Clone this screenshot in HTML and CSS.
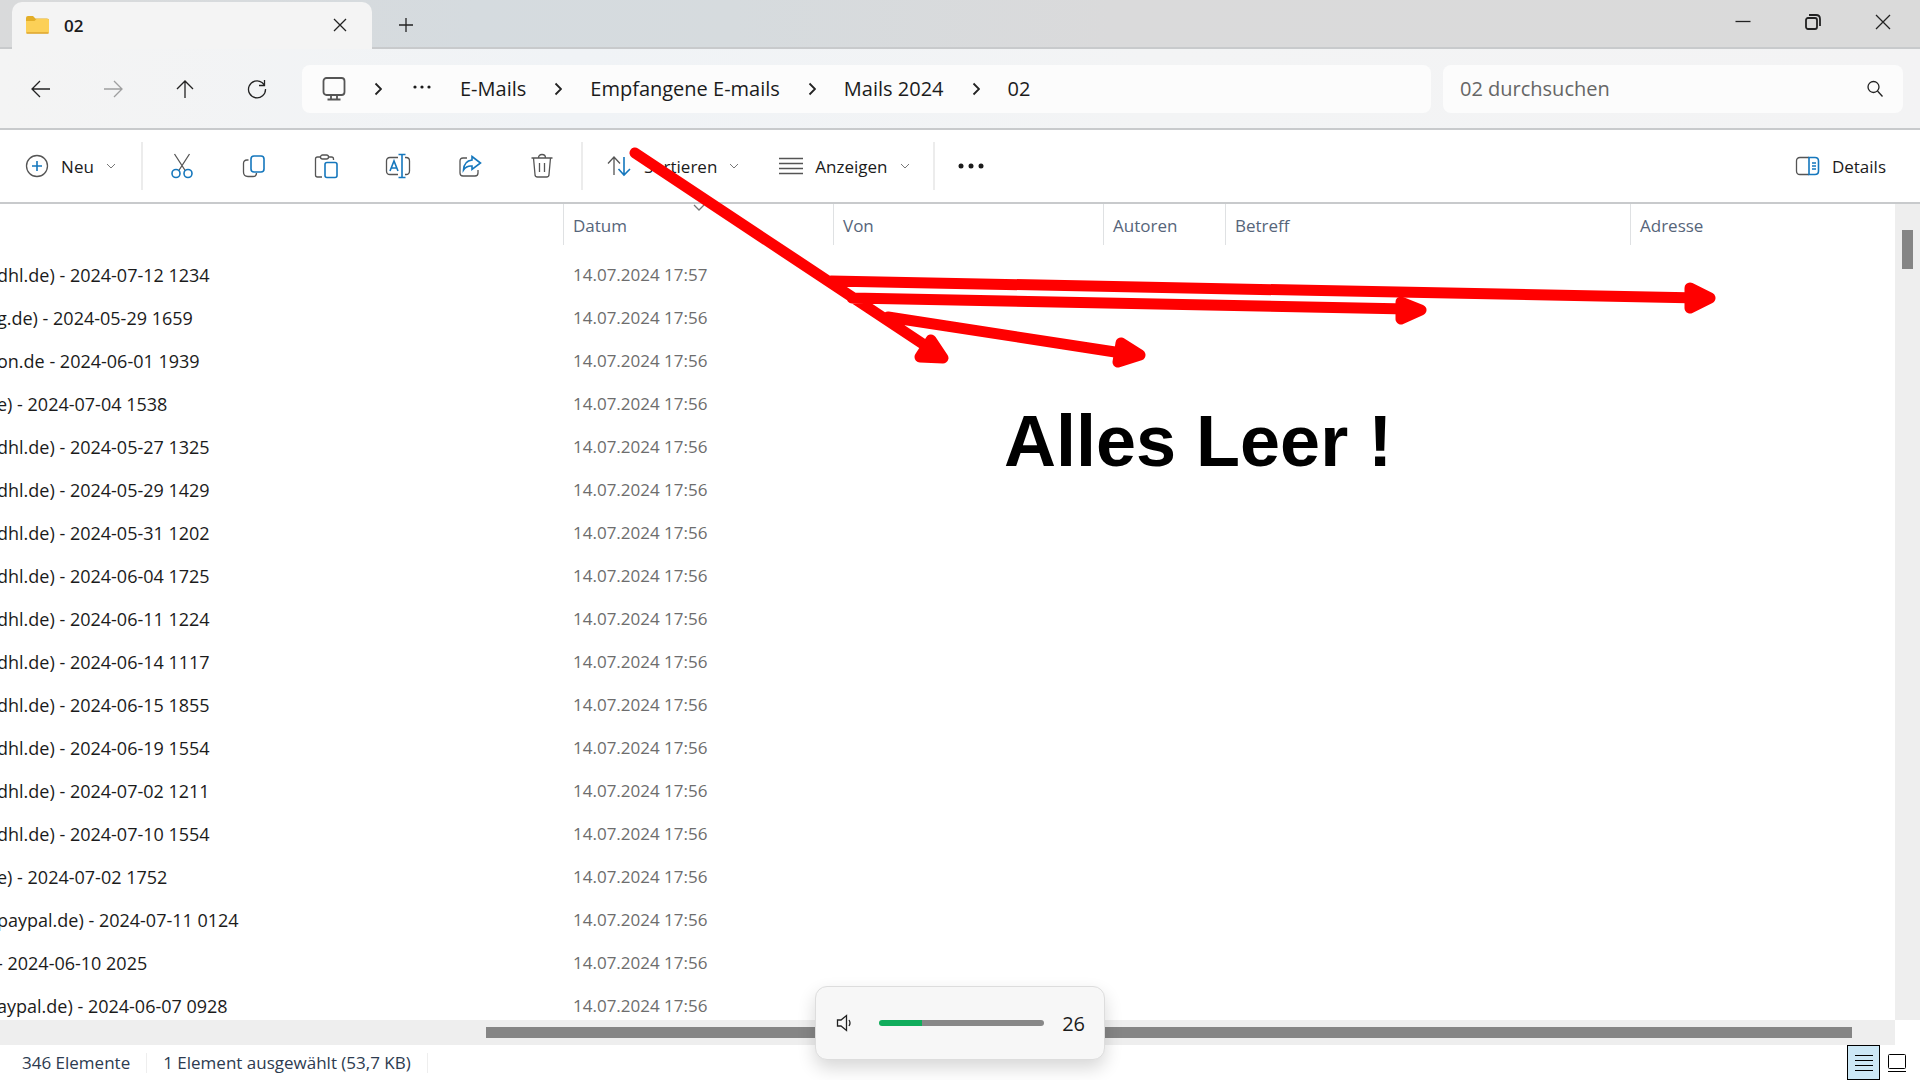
FILE: index.html
```
<!DOCTYPE html>
<html lang="de">

<head>
    <meta charset="UTF-8">
    <meta name="viewport" content="width=device-width, initial-scale=1.0">
    <title>02</title>
    <link rel="stylesheet" href="styles.css">
</head>

<body>

    <header class="titlebar">
        <div class="tab">
            <svg class="folder" width="24" height="20" viewBox="0 0 24 20">
                <path d="M0 2Q0 0 2 0H7L9.500 2.500H21Q23 2.500 23 4V8H0Z" fill="#e3ae28"/>
                <path d="M0 5H8.500L10.500 3H21.500Q23 3 23 4.500V16Q23 17.500 21.500 17.500H1.500Q0 17.500 0 16Z" fill="#fcd057"/>
                <path d="M0.500 17H22.500" stroke="#d9a02a"/>
            </svg>
            <span class="tab-title">02</span>
            <button class="tab-close" aria-label="Tab schließen">
                <svg width="16" height="16" viewBox="0 0 16 16"><path d="M2 1L14 13M14 1L2 13"/></svg>
            </button>
        </div>
        <button class="new-tab" aria-label="Neuer Tab">
            <svg width="18" height="18" viewBox="0 0 18 18"><path d="M9 2V16M2 9H16"/></svg>
        </button>
        <div class="window-buttons">
            <button aria-label="Minimieren">
                <svg width="18" height="18" viewBox="0 0 18 18"><path d="M1.500 8.500H16.500"/></svg>
            </button>
            <button aria-label="Wiederherstellen">
                <svg width="18" height="18" viewBox="0 0 18 18" class="thick"><rect x="2" y="5" width="11" height="11" rx="2"/><path d="M5 2H12Q16 2 16 6V13"/></svg>
            </button>
            <button aria-label="Schließen">
                <svg width="18" height="18" viewBox="0 0 18 18"><path d="M2 2L16 16M16 2L2 16"/></svg>
            </button>
        </div>
    </header>

    <nav class="navbar">
        <div class="nav-buttons">
            <button aria-label="Zurück">
                <svg width="24" height="24" viewBox="0 0 24 24"><path d="M21 12H3M11 4L3 12L11 20"/></svg>
            </button>
            <button aria-label="Vorwärts" disabled>
                <svg width="24" height="24" viewBox="0 0 24 24"><path d="M3 12H21M13 4L21 12L13 20"/></svg>
            </button>
            <button aria-label="Nach oben">
                <svg width="24" height="24" viewBox="0 0 24 24"><path d="M12 21V4M4 12L12 4L20 12"/></svg>
            </button>
            <button aria-label="Aktualisieren">
                <svg width="24" height="24" viewBox="0 0 24 24"><path d="M20.500 12A8.500 8.500 0 1 1 17 5.500L19.500 8M19.500 3V8.500H14"/></svg>
            </button>
        </div>
        <div class="address">
            <svg width="24" height="26" viewBox="0 0 24 26" class="monitor"><rect x="1.500" y="2" width="21" height="17" rx="3"/><path d="M9 19V23M15 19V23M5.500 23.500H18.500"/></svg>
            <svg width="8" height="14" viewBox="0 0 8 14" class="thick"><path d="M1.500 1.500L7 7L1.500 12.500"/></svg>
            <svg width="22" height="14" viewBox="0 0 22 14" class="dots"><circle cx="5" cy="5" r="1.600"/><circle cx="12" cy="5" r="1.600"/><circle cx="19" cy="5" r="1.600"/></svg>
            <a href="#">E-Mails</a>
            <svg width="8" height="14" viewBox="0 0 8 14" class="thick"><path d="M1.500 1.500L7 7L1.500 12.500"/></svg>
            <a href="#">Empfangene E-mails</a>
            <svg width="8" height="14" viewBox="0 0 8 14" class="thick"><path d="M1.500 1.500L7 7L1.500 12.500"/></svg>
            <a href="#">Mails 2024</a>
            <svg width="8" height="14" viewBox="0 0 8 14" class="thick"><path d="M1.500 1.500L7 7L1.500 12.500"/></svg>
            <a href="#">02</a>
        </div>
        <div class="search">
            <input type="search" placeholder="02 durchsuchen" aria-label="02 durchsuchen">
            <svg width="18" height="18" viewBox="0 0 18 18"><circle cx="7.500" cy="7" r="5.500"/><path d="M11.500 11L16.500 16.500"/></svg>
        </div>
    </nav>

    <div class="commands">
        <button class="command new">
            <svg width="24" height="24" viewBox="0 0 24 24"><circle cx="12" cy="12" r="10.500"/><path class="blue" d="M12 7V17M7 12H17"/></svg>
            Neu
            <svg width="10" height="6" viewBox="0 0 10 6" class="chevron"><path d="M1 1L5 5L9 1"/></svg>
        </button>
        <div class="separator"></div>
        <div class="tools">
            <button aria-label="Ausschneiden">
                <svg width="24" height="26" viewBox="0 0 24 26"><path d="M4.500 1L15.500 18M19.500 1L8.500 18"/><circle class="blue" cx="6" cy="20.500" r="4"/><circle class="blue" cx="18" cy="20.500" r="4"/></svg>
            </button>
            <button aria-label="Kopieren">
                <svg width="24" height="26" viewBox="0 0 24 26"><path d="M6.500 7H5Q1.500 7 1.500 10.500V19Q1.500 23.500 6 23.500H11Q14.500 23.500 14.500 20"/><rect class="blue" x="9" y="3" width="13" height="16" rx="3"/></svg>
            </button>
            <button aria-label="Einfügen">
                <svg width="24" height="26" viewBox="0 0 24 26"><path d="M7 4H3.500Q1.500 4 1.500 6V22Q1.500 24 3.500 24H8M14 4H17.500Q19.500 4 19.500 6V7"/><rect x="6.500" y="2" width="8" height="4" rx="2"/><rect class="blue" x="11" y="9.500" width="12" height="15" rx="2"/></svg>
            </button>
            <button aria-label="Umbenennen">
                <svg width="26" height="26" viewBox="0 0 26 26"><path d="M13 4.500H5Q1.500 4.500 1.500 8V18Q1.500 21.500 5 21.500H13M20 4.500H21Q24.500 4.500 24.500 8V18Q24.500 21.500 21 21.500H20"/><path class="blue" d="M5 18L9 8L13 18M6.500 15H11.500M17 2V24M13.500 1.500H20.500M13.500 24.500H20.500"/></svg>
            </button>
            <button aria-label="Freigeben">
                <svg width="24" height="26" viewBox="0 0 24 26"><path d="M9 5H5Q2 5 2 8V20Q2 23 5 23H17Q20 23 20 20V17"/><path class="blue" d="M14 3.500L22.500 10L14 16.500V13Q8.500 12.500 5.500 17Q6 8 14 7Z"/></svg>
            </button>
            <button aria-label="Löschen">
                <svg width="24" height="26" viewBox="0 0 24 26"><path d="M1.500 5H22.500M8.500 5Q8.500 1.500 12 1.500T15.500 5M3.500 5L5 21.500Q5 24 7.500 24H16.500Q19 24 19 21.500L20.500 5M9.500 10V19M14.500 10V19"/></svg>
            </button>
        </div>
        <div class="separator"></div>
        <button class="command sort">
            <svg width="26" height="22" viewBox="0 0 26 22"><path d="M8 20V2M2 8.500L8 2L14 8.500"/><path class="blue" d="M18 2V20M12.500 14L18 20L24 14"/></svg>
            Sortieren
            <svg width="10" height="6" viewBox="0 0 10 6" class="chevron"><path d="M1 1L5 5L9 1"/></svg>
        </button>
        <button class="command view">
            <svg width="24" height="20" viewBox="0 0 24 20"><path d="M0 2.500H24M0 7.500H24M0 12.500H24M0 17.500H24"/></svg>
            Anzeigen
            <svg width="10" height="6" viewBox="0 0 10 6" class="chevron"><path d="M1 1L5 5L9 1"/></svg>
        </button>
        <div class="separator"></div>
        <button class="more" aria-label="Mehr anzeigen">
            <svg width="26" height="8" viewBox="0 0 26 8" class="dots"><circle cx="3" cy="4" r="2.500"/><circle cx="13" cy="4" r="2.500"/><circle cx="23" cy="4" r="2.500"/></svg>
        </button>
        <button class="command details">
            <svg width="25" height="20" viewBox="0 0 25 20"><path d="M14 1.500H5Q1.500 1.500 1.500 5V15Q1.500 18.500 5 18.500H14"/><path class="blue" d="M14 1.500H20Q23.500 1.500 23.500 5V15Q23.500 18.500 20 18.500H14ZM17 7H21M17 10H21M17 13H21"/></svg>
            Details
        </button>
    </div>

    <main class="content">
        <div class="list">
            <table class="files">
                <colgroup>
                    <col class="col-name">
                    <col class="col-date">
                    <col class="col-from">
                    <col class="col-authors">
                    <col class="col-subject">
                    <col>
                </colgroup>
                <thead>
                    <tr>
                        <th aria-label="Name"></th>
                        <th>Datum<svg width="12" height="8" viewBox="0 0 12 8" class="sorted"><path d="M1 1L6 6L11 1"/></svg></th>
                        <th>Von</th>
                        <th>Autoren</th>
                        <th>Betreff</th>
                        <th>Adresse</th>
                    </tr>
                </thead>
                <tbody>
                    <tr><td>dhl.de) - 2024-07-12 1234</td><td>14.07.2024 17:57</td><td></td><td></td><td></td><td></td></tr>
                    <tr><td>g.de) - 2024-05-29 1659</td><td>14.07.2024 17:56</td><td></td><td></td><td></td><td></td></tr>
                    <tr><td>on.de - 2024-06-01 1939</td><td>14.07.2024 17:56</td><td></td><td></td><td></td><td></td></tr>
                    <tr><td>e) - 2024-07-04 1538</td><td>14.07.2024 17:56</td><td></td><td></td><td></td><td></td></tr>
                    <tr><td>dhl.de) - 2024-05-27 1325</td><td>14.07.2024 17:56</td><td></td><td></td><td></td><td></td></tr>
                    <tr><td>dhl.de) - 2024-05-29 1429</td><td>14.07.2024 17:56</td><td></td><td></td><td></td><td></td></tr>
                    <tr><td>dhl.de) - 2024-05-31 1202</td><td>14.07.2024 17:56</td><td></td><td></td><td></td><td></td></tr>
                    <tr><td>dhl.de) - 2024-06-04 1725</td><td>14.07.2024 17:56</td><td></td><td></td><td></td><td></td></tr>
                    <tr><td>dhl.de) - 2024-06-11 1224</td><td>14.07.2024 17:56</td><td></td><td></td><td></td><td></td></tr>
                    <tr><td>dhl.de) - 2024-06-14 1117</td><td>14.07.2024 17:56</td><td></td><td></td><td></td><td></td></tr>
                    <tr><td>dhl.de) - 2024-06-15 1855</td><td>14.07.2024 17:56</td><td></td><td></td><td></td><td></td></tr>
                    <tr><td>dhl.de) - 2024-06-19 1554</td><td>14.07.2024 17:56</td><td></td><td></td><td></td><td></td></tr>
                    <tr><td>dhl.de) - 2024-07-02 1211</td><td>14.07.2024 17:56</td><td></td><td></td><td></td><td></td></tr>
                    <tr><td>dhl.de) - 2024-07-10 1554</td><td>14.07.2024 17:56</td><td></td><td></td><td></td><td></td></tr>
                    <tr><td>e) - 2024-07-02 1752</td><td>14.07.2024 17:56</td><td></td><td></td><td></td><td></td></tr>
                    <tr><td>paypal.de) - 2024-07-11 0124</td><td>14.07.2024 17:56</td><td></td><td></td><td></td><td></td></tr>
                    <tr><td>- 2024-06-10 2025</td><td>14.07.2024 17:56</td><td></td><td></td><td></td><td></td></tr>
                    <tr><td>aypal.de) - 2024-06-07 0928</td><td>14.07.2024 17:56</td><td></td><td></td><td></td><td></td></tr>
                </tbody>
            </table>
        </div>
        <div class="scroll-y"><div class="thumb"></div></div>
        <div class="scroll-x"><div class="thumb"></div></div>
    </main>

    <footer class="status">
        <span>346 Elemente</span>
        <span>1 Element ausgewählt (53,7 KB)</span>
        <div class="view-switch">
            <button class="active" aria-label="Details">
                <svg width="18" height="18" viewBox="0 0 18 18"><path d="M0 1.500H18M0 6.500H18M0 11.500H18M0 16.500H18"/></svg>
            </button>
            <button aria-label="Große Symbole">
                <svg width="18" height="18" viewBox="0 0 18 18"><rect x="0.500" y="0.500" width="17" height="14" rx="1"/><path d="M0 17.500H18"/></svg>
            </button>
        </div>
    </footer>

    <div class="volume">
        <svg width="18" height="18" viewBox="0 0 18 18"><path d="M1.500 6H5L10.500 1.500V16.500L5 12H1.500ZM13 6Q15 9 13 12"/></svg>
        <input type="range" min="0" max="100" value="26" aria-label="Lautstärke">
        <span>26</span>
    </div>

    <!-- markup drawn over the window -->
    <svg class="arrows" viewBox="0 0 1920 1080" preserveAspectRatio="xMinYMin meet">
        <path d="M635 153L932 350M831 281L1700 298M852 298L1408 309M888 317L1128 354"/>
        <path class="head" d="M931 340L943 358L920 357ZM1690 288L1710 298L1690 308ZM1401 302L1421 310L1401 319ZM1121 343L1140 355L1118 362Z"/>
    </svg>
    <div class="note">Alles Leer !</div>

</body>

</html>
```
FILE: styles.css
```
* {
    box-sizing: border-box;
}

body {
    display: flex;
    flex-direction: column;
    height: 100vh;
    margin: 0;
    overflow: hidden;
    position: relative;
    background-color: #fff;
    color: #1b1b1b;
    font-family: "Open Sans", "Noto Sans", sans-serif;
    font-size: 17px;
}

button {
    display: flex;
    justify-content: center;
    align-items: center;
    padding: 0;
    border: none;
    background: none;
    color: inherit;
    font: inherit;
}

svg {
    flex: none;
    fill: none;
    stroke: #222;
    stroke-width: 1.3;
}

.thick {
    stroke-width: 1.8;
}

.dots {
    fill: #1b1b1b;
    stroke: none;
}

/* title bar */

.titlebar {
    display: flex;
    height: 49px;
    padding: 0 2px 0 12px;
    background: linear-gradient(90deg, #d9dadb, #d5dbdf 25%, #d6dbde 38%, #dadadb 58%, #dadada);
    box-shadow: inset 0 -2px #c8cacc;
}

.tab {
    display: flex;
    align-items: center;
    width: 360px;
    margin-top: 2px;
    padding: 0 22px 0 14px;
    border-radius: 10px 10px 0 0;
    background-color: #f4f4f4;
}

.folder {
    stroke: none;
}

.tab-title {
    margin-left: 14px;
    font-weight: 600;
}

.tab-close {
    width: 20px;
    height: 20px;
    margin-left: auto;
}

.new-tab {
    width: 68px;
}

.window-buttons {
    display: flex;
    height: 43px;
    margin-left: auto;
}

.window-buttons button {
    width: 70px;
}

/* navigation */

.navbar {
    display: flex;
    align-items: center;
    height: 81px;
    padding: 0 17px 0 5px;
    border-bottom: 2px solid #c8cacc;
    background: linear-gradient(90deg, #f4f4f4, #f0f3f6 30%, #f3f4f5 60%, #f3f3f4);
    font-size: 20px;
}

.nav-buttons {
    display: flex;
    margin-right: 9px;
}

.nav-buttons button {
    width: 72px;
    height: 48px;
}

.nav-buttons button:disabled {
    opacity: 0.4;
}

.address {
    display: flex;
    flex: 1;
    align-items: center;
    gap: 28px;
    height: 48px;
    padding-left: 20px;
    border-radius: 8px;
    background-color: #fcfcfc;
}

.address a {
    color: inherit;
    text-decoration: none;
}

.monitor {
    stroke: #555;
    stroke-width: 1.8;
}

.search {
    display: flex;
    align-items: center;
    width: 460px;
    height: 48px;
    margin-left: 12px;
    padding: 0 19px 0 17px;
    border-radius: 8px;
    background-color: #fcfcfc;
}

.search input {
    flex: 1;
    min-width: 0;
    padding: 0;
    border: none;
    outline: none;
    background: none;
    font: inherit;
}

.search input::placeholder {
    color: #666;
}

/* command bar */

.commands {
    display: flex;
    align-items: center;
    height: 74px;
    border-bottom: 2px solid #c8cacc;
}

.commands svg {
    stroke: #555;
}

.commands .blue {
    stroke: #1577bd;
    stroke-width: 1.6;
}

.commands .dots {
    stroke: none;
}

.commands .chevron {
    stroke: #777;
    stroke-width: 1;
}

.command {
    gap: 12px;
    height: 48px;
}

.new {
    width: 141px;
}

.separator {
    width: 2px;
    height: 48px;
    background-color: #ececec;
}

.tools {
    display: flex;
    padding: 0 3px;
}

.tools button {
    width: 72px;
    height: 48px;
}

.sort {
    margin-left: 23px;
}

.view {
    margin: 0 23px 0 40px;
}

.more {
    width: 72px;
    height: 48px;
}

.details {
    margin: 0 34px 0 auto;
}

/* file list */

.content {
    display: grid;
    flex: 1;
    grid-template-columns: 1fr 25px;
    grid-template-rows: 1fr 25px;
    min-height: 0;
}

.list {
    overflow: hidden;
}

.files {
    width: 100%;
    margin-left: -3px;
    border-spacing: 0;
    table-layout: fixed;
}

.col-name {
    width: 566px;
}

.col-date,
.col-from {
    width: 270px;
}

.col-authors {
    width: 122px;
}

.col-subject {
    width: 405px;
}

th {
    position: relative;
    height: 41px;
    padding: 2px 0 0 9px;
    border-left: 1px solid #dfe1e3;
    color: #56657a;
    font-weight: 400;
    text-align: left;
}

th:first-child {
    border-left: none;
}

.sorted {
    position: absolute;
    top: 0;
    left: 48%;
    stroke: #777;
}

td {
    height: 43px;
    padding: 0 0 0 10px;
    color: #6d6d6d;
    white-space: nowrap;
}

td:first-child {
    padding-left: 0;
    color: #1b1b1b;
    font-size: 18px;
}

tbody::before {
    content: "";
    display: block;
    height: 8px;
}

.scroll-y {
    padding: 26px 7px 0;
    background-color: #eee;
}

.scroll-y .thumb {
    height: 39px;
    background-color: #858585;
}

.scroll-x {
    padding: 7px 43px 7px 486px;
    background-color: #eee;
}

.scroll-x .thumb {
    height: 11px;
    background-color: #858585;
}

/* status bar */

.status {
    display: flex;
    align-items: center;
    height: 35px;
    padding-left: 6px;
    color: #2d3b50;
}

.status span {
    padding: 0 16px;
    border-right: 1px solid #eee;
    line-height: 20px;
}

.view-switch {
    display: flex;
    margin: 0 7px 0 auto;
}

.view-switch button {
    width: 33px;
    height: 35px;
}

.view-switch .active {
    border: 1px solid #000;
    background-color: #cce8f6;
}

.view-switch svg {
    stroke: #000;
    stroke-width: 1;
}

/* volume flyout */

.volume {
    display: flex;
    align-items: center;
    position: absolute;
    bottom: 20px;
    left: 50%;
    width: 290px;
    height: 74px;
    margin-left: -145px;
    padding: 0 19px 0 20px;
    border: 1px solid #ddd;
    border-radius: 12px;
    background-color: #f7f7f7;
    box-shadow: 0 8px 18px rgba(0, 0, 0, 0.16);
    font-size: 20px;
}

.volume input {
    flex: 1;
    min-width: 0;
    height: 6px;
    margin: 0 18px 0 25px;
    border-radius: 3px;
    appearance: none;
    background: linear-gradient(90deg, #10ad5c 26%, #888 26%);
}

.volume input::-webkit-slider-thumb {
    width: 0;
    height: 0;
    appearance: none;
}

/* arrows and note */

.arrows {
    position: absolute;
    top: 0;
    left: 0;
    width: 100%;
    stroke: #f00;
    stroke-width: 11;
    stroke-linecap: round;
    stroke-linejoin: round;
    pointer-events: none;
}

.head {
    fill: #f00;
}

.note {
    position: absolute;
    top: 401px;
    left: 1004px;
    color: #000;
    font: bold 72px/80px "Liberation Sans", Arial, sans-serif;
}
```
